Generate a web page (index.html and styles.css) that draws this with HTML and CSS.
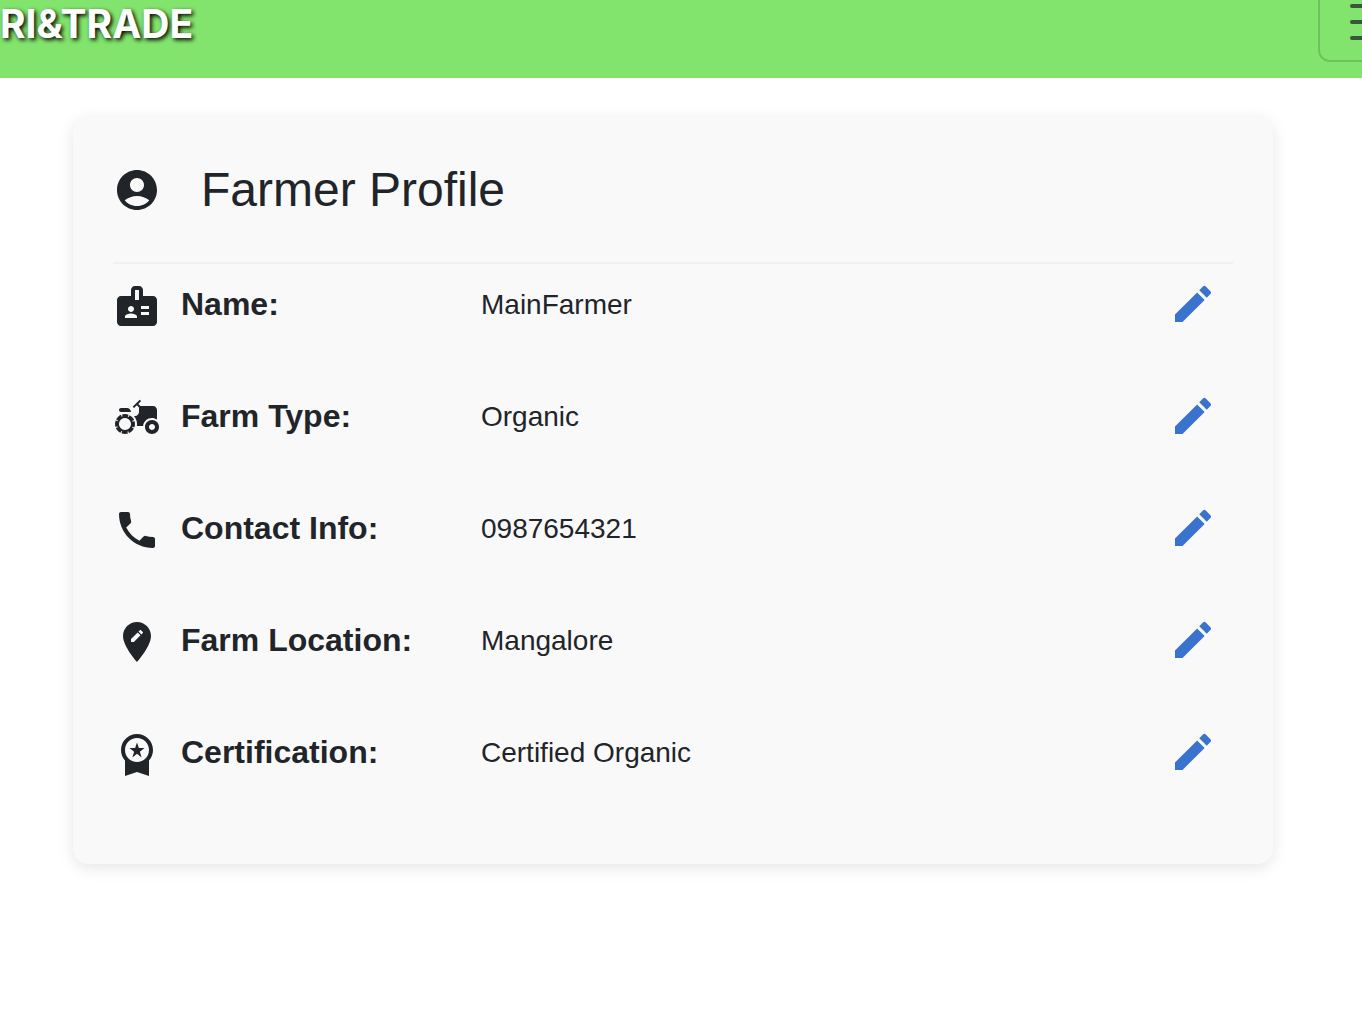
FILE: index.html
```html
<!DOCTYPE html>
<html lang="en">
<head>
<meta charset="utf-8">
<meta name="viewport" content="width=device-width, initial-scale=1">
<title>Farmer Profile</title>
<link rel="stylesheet" href="styles.css">
</head>
<body>
<svg class="sprite" aria-hidden="true">
  <symbol id="edit" viewBox="0 0 24 24"><path d="M3 17.25V21h3.75L17.81 9.94l-3.75-3.75L3 17.25zM20.71 7.04c.39-.39.39-1.02 0-1.41l-2.34-2.34a.9959.9959 0 0 0-1.41 0l-1.83 1.83 3.75 3.75 1.83-1.83z"/></symbol>
</svg>
<header class="navbar">
  <a class="brand" href="#">RI&amp;TRADE</a>
  <button class="toggler" type="button" aria-label="Toggle navigation">
    <svg class="toggler-icon" viewBox="0 0 30 30"><path d="M4 7h22M4 15h22M4 23h22"/></svg>
  </button>
</header>
<main class="page">
  <section class="card">
    <div class="card-header">
      <svg class="icon" viewBox="0 0 24 24"><path d="M12 2C6.48 2 2 6.48 2 12s4.48 10 10 10 10-4.480 10-10S17.520 2 12 2zm0 4c1.930 0 3.500 1.570 3.500 3.500S13.930 13 12 13s-3.500-1.570-3.500-3.500S10.070 6 12 6zm0 14c-2.030 0-4.430-.82-6.140-2.880C7.550 15.800 9.680 15 12 15s4.450.8 6.140 2.120C16.430 19.180 14.030 20 12 20z"/></svg>
      <h1 class="title">Farmer Profile</h1>
    </div>
    <dl class="rows">
      <div class="row">
        <dt class="label"><svg class="icon" viewBox="0 0 24 24"><path d="M20 7h-5V4c0-1.100-.9-2-2-2h-2c-1.100 0-2 .9-2 2v3H4c-1.100 0-2 .9-2 2v11c0 1.100.9 2 2 2h16c1.100 0 2-.9 2-2V9c0-1.100-.9-2-2-2zM9 12c.83 0 1.500.67 1.500 1.500S9.830 15 9 15s-1.500-.67-1.500-1.500S8.170 12 9 12zm3 6H6v-.75c0-1 2-1.500 3-1.500s3 .5 3 1.500V18zm1-9h-2V4h2v5zm5 7.500h-4V15h4v1.500zm0-3h-4V12h4v1.500z"/></svg><span>Name:</span></dt>
        <dd class="value">MainFarmer</dd>
        <dd class="action"><button class="edit" type="button" aria-label="Edit name"><svg class="icon"><use href="#edit"/></svg></button></dd>
      </div>
      <div class="row">
        <dt class="label"><svg class="icon" viewBox="0 0 24 24"><path d="M19.500 12c.93 0 1.780.28 2.500.76V8c0-1.100-.9-2-2-2h-6.290l-1.060-1.060 1.410-1.410-.71-.71-3.530 3.530.71.71 1.410-1.410L13 6.710V9c0 1.100-.9 2-2 2h-.54c.95 1.060 1.540 2.460 1.540 4 0 .34-.04.67-.09 1h3.140c.25-2.250 2.140-4 4.450-4z"/><path d="M19.500 13c-1.930 0-3.500 1.570-3.500 3.500s1.570 3.500 3.500 3.500 3.500-1.570 3.500-3.500-1.570-3.500-3.500-3.500zm0 5c-.83 0-1.500-.67-1.500-1.500s.67-1.500 1.500-1.500 1.500.67 1.500 1.500-.67 1.500-1.500 1.500zM4 9h5c0-1.100-.9-2-2-2H4c-.55 0-1 .45-1 1s.45 1 1 1zM9.830 13.820l-.18-.47.930-.35c-.46-1.060-1.280-1.910-2.310-2.430l-.4.890-.46-.21.4-.9C7.260 10.130 6.640 10 6 10c-.53 0-1.040.11-1.520.26l.34.91-.47.18L4 10.420c-1.060.46-1.910 1.280-2.430 2.310l.89.4-.21.46-.9-.4C1.130 13.740 1 14.360 1 15c0 .53.11 1.040.26 1.520l.91-.34.18.47-.93.350c.46 1.060 1.280 1.910 2.310 2.430l.4-.89.460.21-.4.9c.55.22 1.170.35 1.810.35.530 0 1.040-.11 1.520-.26l-.34-.91.47-.18.35.93c1.060-.46 1.910-1.280 2.430-2.310l-.89-.4.21-.46.9.4c.22-.55.35-1.170.35-1.810 0-.53-.11-1.040-.26-1.520l-.91.340zM7.150 17.770c-1.530.63-3.290-.09-3.920-1.620-.63-1.530.09-3.290 1.620-3.920 1.530-.63 3.290.09 3.920 1.620.64 1.530-.09 3.290-1.620 3.920z"/></svg><span>Farm Type:</span></dt>
        <dd class="value">Organic</dd>
        <dd class="action"><button class="edit" type="button" aria-label="Edit farm type"><svg class="icon"><use href="#edit"/></svg></button></dd>
      </div>
      <div class="row">
        <dt class="label"><svg class="icon" viewBox="0 0 24 24"><path d="M6.620 10.790c1.440 2.830 3.760 5.140 6.590 6.590l2.200-2.200c.27-.27.67-.36 1.020-.24 1.120.37 2.330.57 3.570.57.55 0 1 .45 1 1V20c0 .55-.45 1-1 1-9.390 0-17-7.610-17-17 0-.55.45-1 1-1h3.500c.55 0 1 .45 1 1 0 1.250.2 2.450.57 3.570.11.35.03.74-.25 1.020l-2.200 2.200z"/></svg><span>Contact Info:</span></dt>
        <dd class="value">0987654321</dd>
        <dd class="action"><button class="edit" type="button" aria-label="Edit contact info"><svg class="icon"><use href="#edit"/></svg></button></dd>
      </div>
      <div class="row">
        <dt class="label"><svg class="icon" viewBox="0 0 24 24"><path d="M12 2C8.140 2 5 5.140 5 9c0 5.250 7 13 7 13s7-7.750 7-13c0-3.860-3.140-7-7-7zm-1.560 10H9v-1.440l3.350-3.340 1.430 1.430L10.440 12zm4.450-4.450-.7.700-1.440-1.440.7-.7c.15-.15.39-.15.54 0l.9.9c.15.15.15.390 0 .54z"/></svg><span>Farm Location:</span></dt>
        <dd class="value">Mangalore</dd>
        <dd class="action"><button class="edit" type="button" aria-label="Edit farm location"><svg class="icon"><use href="#edit"/></svg></button></dd>
      </div>
      <div class="row">
        <dt class="label"><svg class="icon" viewBox="0 0 24 24"><path d="m9.680 13.690 2.320-1.760 2.310 1.760-.88-2.850L15.750 9h-2.820L12 6.190 11.070 9H8.250l2.310 1.840-.88 2.850zM20 10c0-4.420-3.580-8-8-8s-8 3.580-8 8c0 2.030.76 3.870 2 5.280V23l6-2 6 2v-7.720c1.240-1.410 2-3.250 2-5.280zm-8-6c3.310 0 6 2.690 6 6s-2.690 6-6 6-6-2.690-6-6 2.690-6 6-6z"/></svg><span>Certification:</span></dt>
        <dd class="value">Certified Organic</dd>
        <dd class="action"><button class="edit" type="button" aria-label="Edit certification"><svg class="icon"><use href="#edit"/></svg></button></dd>
      </div>
    </dl>
  </section>
</main>
</body>
</html>
```
FILE: styles.css
```css
* {
  box-sizing: border-box;
}

body {
  margin: 0;
  background: #fff;
  color: #212529;
  font-family: "Liberation Sans", Arial, sans-serif;
}

.sprite {
  display: none;
}

.navbar {
  display: flex;
  justify-content: space-between;
  align-items: flex-start;
  height: 78px;
  overflow: hidden;
  background: #82e46c;
}

.brand {
  color: #fff;
  font: 700 39px/48px Inter, sans-serif;
  text-decoration: none;
  text-shadow: 2px 2px 4px #000;
}

.toggler {
  flex: none;
  margin: -18px -68px 0 0;
  padding: 8px 24px;
  border: 2px solid rgba(0, 0, 0, 0.15);
  border-radius: 12px;
  background: none;
}

.toggler-icon {
  display: block;
  width: 60px;
  height: 60px;
  fill: none;
  stroke: rgba(33, 37, 41, 0.75);
  stroke-width: 2;
  stroke-linecap: round;
}

.page {
  padding: 38px 89px 38px 73px;
}

.card {
  max-width: 1200px;
  margin: 0 auto;
  padding: 40px;
  border-radius: 16px;
  background: #f9f9f9;
  box-shadow: 0 4px 16px rgba(0, 0, 0, 0.1);
}

.card-header {
  display: flex;
  align-items: center;
  gap: 40px;
  padding: 4px 0 42px;
  border-bottom: 2px solid #f0f0f0;
}

.icon {
  display: block;
  flex: none;
  width: 48px;
  height: 48px;
  fill: currentColor;
}

.title {
  margin: 0;
  font-size: 48px;
  font-weight: 400;
  line-height: 60px;
}

.rows {
  margin: 0;
}

.row {
  display: grid;
  grid-template-columns: 368px 1fr auto;
  align-items: center;
  margin-bottom: 32px;
}

.row:last-child {
  margin-bottom: 0;
  padding-bottom: 32px;
}

.label {
  display: flex;
  align-items: flex-end;
  gap: 20px;
  height: 52px;
  font-size: 32px;
  font-weight: 700;
  line-height: 52px;
}

.value {
  margin: 0;
  padding-top: 2px;
  font-size: 28px;
  line-height: 40px;
}

.action {
  margin: 0;
}

.edit {
  display: block;
  padding: 16px;
  border: 0;
  border-radius: 50%;
  background: none;
  color: #3973cd;
}
```
